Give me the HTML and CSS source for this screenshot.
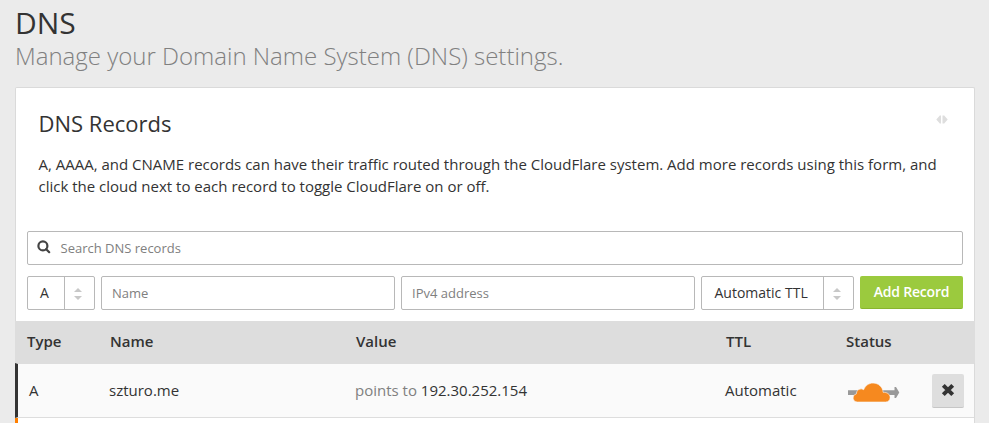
FILE: index.html
```html
<!DOCTYPE html>
<html lang="en">
<head>
<meta charset="utf-8">
<title>DNS</title>
<link rel="stylesheet" href="styles.css">
</head>
<body>
<header class="page-header">
  <h1>DNS</h1>
  <p>Manage your Domain Name System (DNS) settings.</p>
</header>
<section class="panel">
  <div class="intro">
    <div class="intro-head">
      <h2>DNS Records</h2>
      <svg class="expand" width="12" height="9" viewBox="0 0 12 9"><path d="M.3 4.500 3.800.6H5v7.800H3.800zM11.700 4.500 8.200.6H6.500v7.800h1.700z"/></svg>
    </div>
    <p>A, AAAA, and CNAME records can have their traffic routed through the CloudFlare system. Add more records using this form, and<br>click the cloud next to each record to toggle CloudFlare on or off.</p>
  </div>
  <div class="forms">
    <div class="field search">
      <svg width="14" height="14" viewBox="0 0 14 14"><circle cx="5.900" cy="5.900" r="4.500"/><path d="m9.200 9.200 3 3"/></svg>
      <span>Search DNS records</span>
    </div>
    <div class="add-row">
      <div class="select type"><span>A</span><i><svg width="8" height="12" viewBox="0 0 8 12"><path d="M4 0l4 4H0zM4 12 0 8h8z"/></svg></i></div>
      <div class="field"><span>Name</span></div>
      <div class="field"><span>IPv4 address</span></div>
      <div class="select ttl"><span>Automatic TTL</span><i><svg width="8" height="12" viewBox="0 0 8 12"><path d="M4 0l4 4H0zM4 12 0 8h8z"/></svg></i></div>
      <button class="add">Add Record</button>
    </div>
  </div>
  <div class="row head">
    <span>Type</span><span>Name</span><span>Value</span><span>TTL</span><span>Status</span>
  </div>
  <div class="row record">
    <span>A</span>
    <span>szturo.me</span>
    <span><em>points to</em> 192.30.252.154</span>
    <span>Automatic</span>
    <svg class="cloud" width="52" height="20" viewBox="0 0 52 20">
      <path class="arrow" d="M0 8.300h46.500V5H48l3.300 5.500L48 16h-1.500v-3H0z"/>
      <path class="cloud-shape" d="M9.200 20a4.100 4.100 0 0 1-.9-8.100A4.800 4.800 0 0 1 15.700 7.700C17.300 3.600 20.800 1.100 25.100 1.100c5.500 0 9.500 3.900 10.100 9.300 3.700-.3 6.900 1.700 6.900 5 0 2.800-1.800 4.600-4.600 4.600z"/>
    </svg>
    <button class="delete"><svg width="14" height="14" viewBox="0 0 14 14"><path d="m2.300 2.300 9.400 9.400M11.700 2.300 2.300 11.700"/></svg></button>
  </div>
  <div class="row next"></div>
</section>
</body>
</html>
```
FILE: styles.css
```css
* { box-sizing: border-box; }
html, body { height: 423px; overflow: hidden; }
body {
  margin: 0;
  padding: 0 15px;
  background: #ebebeb;
  color: #333;
  font: 15px/22px "Open Sans", sans-serif;
}
h1, h2, p { margin: 0; font-weight: 400; }
svg { display: block; flex: none; }
.page-header { height: 87px; white-space: nowrap; }
h1 { padding-top: 3px; font-size: 30px; line-height: 40px; }
.page-header p {
  color: #808080;
  font-size: 24px;
  font-weight: 300;
  line-height: 26px;
}
.panel {
  width: 960px;
  height: 336px;
  border: 1px solid #dadada;
  border-bottom: 0;
  border-radius: 2px 2px 0 0;
  background: #fff;
}
.intro { height: 143px; padding: 20px 26px 0 22.500px; white-space: nowrap; }
.intro-head {
  display: flex;
  justify-content: space-between;
  height: 45px;
}
h2 { font-size: 22px; line-height: 30px; }
.expand { margin-top: 7px; fill: #dedede; }
.forms { height: 90px; padding: 0 11px; }
.field, .select {
  display: flex;
  align-items: center;
  height: 34px;
  border: 1px solid #b8b8b8;
  border-radius: 2px;
  background: #fff;
  white-space: nowrap;
}
.field { flex: 1; padding-left: 10px; color: #808080; font-size: 13px; }
.search { gap: 9.500px; padding-left: 9px; }
.search svg { fill: none; stroke: #444; stroke-width: 2.200; stroke-linecap: round; margin-top: -2px; }
.add-row { display: flex; gap: 6px; margin-top: 11px; }
.select { font-size: 14px; }
.select span { flex: 1; padding-left: 12px; }
.select i {
  display: flex;
  justify-content: center;
  align-items: center;
  width: 30px;
  height: 100%;
  border-left: 1px solid #b8b8b8;
}
.select svg { fill: #c8c8c8; margin: 2px 3px 0 0; }
.type { width: 68px; }
.ttl { width: 153px; }
.ttl span { padding-left: 12.500px; }
button { border: 0; padding: 0; font: inherit; }
.add {
  width: 103px;
  height: 33px;
  padding-bottom: 1px;
  border-bottom: 1px solid #88b52e;
  border-radius: 2px;
  background: #9bca3e;
  color: #fff;
  font-size: 14px;
  font-weight: 600;
  letter-spacing: -.2px;
  white-space: nowrap;
}
.row {
  display: grid;
  grid-template-columns: 83px 246px 370px 120px 88px 32px;
  align-items: center;
  white-space: nowrap;
}
.head {
  height: 42px;
  margin: 0 -1px;
  padding: 0 0 2px 12px;
  background: #ddd;
  font-weight: 600;
}
.record {
  height: 55px;
  margin-left: -1px;
  padding-left: 11px;
  grid-template-columns: 80px 246px 370px 123px 84px 32px;
  border-left: 3px solid #333;
  border-top: 1px solid #ddd;
  border-bottom: 1px solid #ddd;
  background: #fafafa;
}
.record span { padding-bottom: 2px; }
em { color: #808080; font-style: normal; }
.arrow { fill: #999; }
.cloud-shape { fill: #f6891f; stroke: #fafafa; stroke-width: .6; }
.cloud { margin-top: 3px; }
.delete {
  display: flex;
  align-items: center;
  justify-content: center;
  width: 32px;
  height: 34px;
  border-bottom: 1px solid #c6c6c6;
  border-radius: 2px;
  background: #dedede;
}
.delete svg { stroke: #333; stroke-width: 4; fill: none; }
.next { height: 5px; margin-left: -1px; border-left: 3px solid #ff7f00; }
```
